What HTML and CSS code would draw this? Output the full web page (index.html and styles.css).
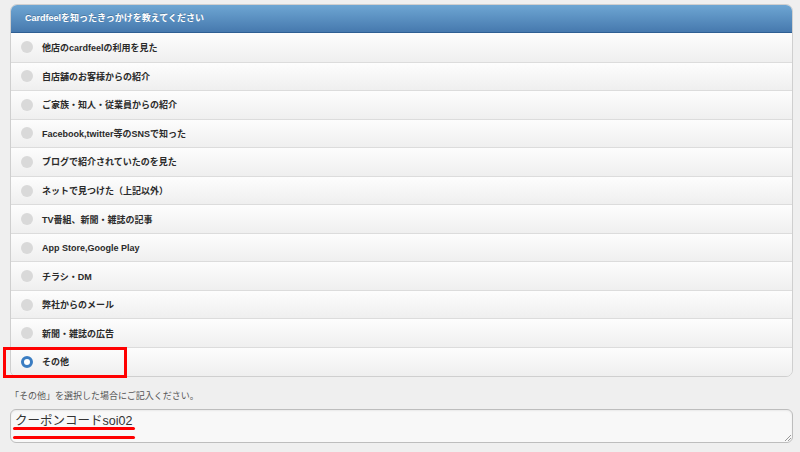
FILE: index.html
```html
<!DOCTYPE html>
<html lang="ja">
<head>
<meta charset="utf-8">
<link rel="stylesheet" href="styles.css">
</head>
<body>
<div class="page">
  <div class="panel">
    <div class="panel-head">Cardfeelを知ったきっかけを教えてください</div>
    <ul class="options">
      <li class="opt"><span class="radio"></span>他店のcardfeelの利用を見た</li>
      <li class="opt"><span class="radio"></span>自店舗のお客様からの紹介</li>
      <li class="opt"><span class="radio"></span>ご家族・知人・従業員からの紹介</li>
      <li class="opt"><span class="radio"></span>Facebook,twitter等のSNSで知った</li>
      <li class="opt"><span class="radio"></span>ブログで紹介されていたのを見た</li>
      <li class="opt"><span class="radio"></span>ネットで見つけた（上記以外）</li>
      <li class="opt"><span class="radio"></span>TV番組、新聞・雑誌の記事</li>
      <li class="opt"><span class="radio"></span>App Store,Google Play</li>
      <li class="opt"><span class="radio"></span>チラシ・DM</li>
      <li class="opt"><span class="radio"></span>弊社からのメール</li>
      <li class="opt"><span class="radio"></span>新聞・雑誌の広告</li>
      <li class="opt selected"><span class="radio"></span>その他</li>
    </ul>
  </div>
  <p class="note">「その他」を選択した場合にご記入ください。</p>
  <div class="field">クーポンコードsoi02<span class="resize"></span></div>
  <div class="mark-box"></div>
  <div class="mark-line one"></div>
  <div class="mark-line two"></div>
</div>
</body>
</html>
```

FILE: styles.css
```css
html, body {
  margin: 0;
  padding: 0;
  background: #efefef;
  font-family: "Liberation Sans", "Noto Sans CJK JP", sans-serif;
}
.page {
  position: relative;
  width: 800px;
  height: 452px;
  padding: 4px 7px 0 10px;
  box-sizing: border-box;
  overflow: hidden;
}
.panel {
  border: 1px solid #cfcfcf;
  border-radius: 7px;
  overflow: hidden;
  background: #f4f4f4;
}
.panel-head {
  height: 27px;
  line-height: 27px;
  padding-left: 14px;
  color: #fff;
  font-size: 9px;
  font-weight: 700;
  background: linear-gradient(#6ea6d3, #4679ae);
  border-bottom: 1px solid #2f5f93;
  text-shadow: 0 -1px 0 rgba(0,0,0,0.2);
}
.options {
  list-style: none;
  margin: 0;
  padding: 0;
}
.opt {
  display: flex;
  align-items: center;
  height: 27.55px;
  border-top: 1px solid #dcdcdc;
  padding-left: 10px;
  font-size: 9px;
  font-weight: 700;
  color: #2a2a2a;
  background: linear-gradient(#fdfdfd, #efefef);
}
.opt:first-child {
  border-top: none;
  height: 28.55px;
}
.radio {
  width: 12px;
  height: 12px;
  border-radius: 50%;
  background: #d9d9d9;
  margin-right: 9px;
  box-sizing: border-box;
  flex: none;
}
.selected .radio {
  background: #fff;
  border: 3.5px solid #3b7dc2;
}
.note {
  margin: 12px 0 0 0;
  height: 14px;
  line-height: 14px;
  font-size: 9px;
  color: #555;
}
.field {
  position: relative;
  margin-top: 6px;
  height: 34px;
  border: 1px solid #bdbdbd;
  border-radius: 6px;
  background: #f8f8f8;
  box-shadow: inset 0 1px 2px rgba(0,0,0,0.06);
  padding: 3px 0 0 4px;
  box-sizing: border-box;
  font-size: 12.5px;
  line-height: 17px;
  color: #333;
}
.resize {
  position: absolute;
  right: 1px;
  bottom: 1px;
  width: 6px;
  height: 6px;
  background: linear-gradient(135deg, transparent 45%, #999 45%, #999 55%, transparent 55%, transparent 70%, #999 70%, #999 80%, transparent 80%);
}
.mark-box {
  position: absolute;
  left: 3px;
  top: 347px;
  width: 118px;
  height: 25px;
  border: 3px solid #f00;
}
.mark-line {
  position: absolute;
  left: 13px;
  width: 122px;
  height: 3px;
  border-radius: 2px;
  background: #f00;
}
.mark-line.one { top: 427px; }
.mark-line.two { top: 436px; }
```
